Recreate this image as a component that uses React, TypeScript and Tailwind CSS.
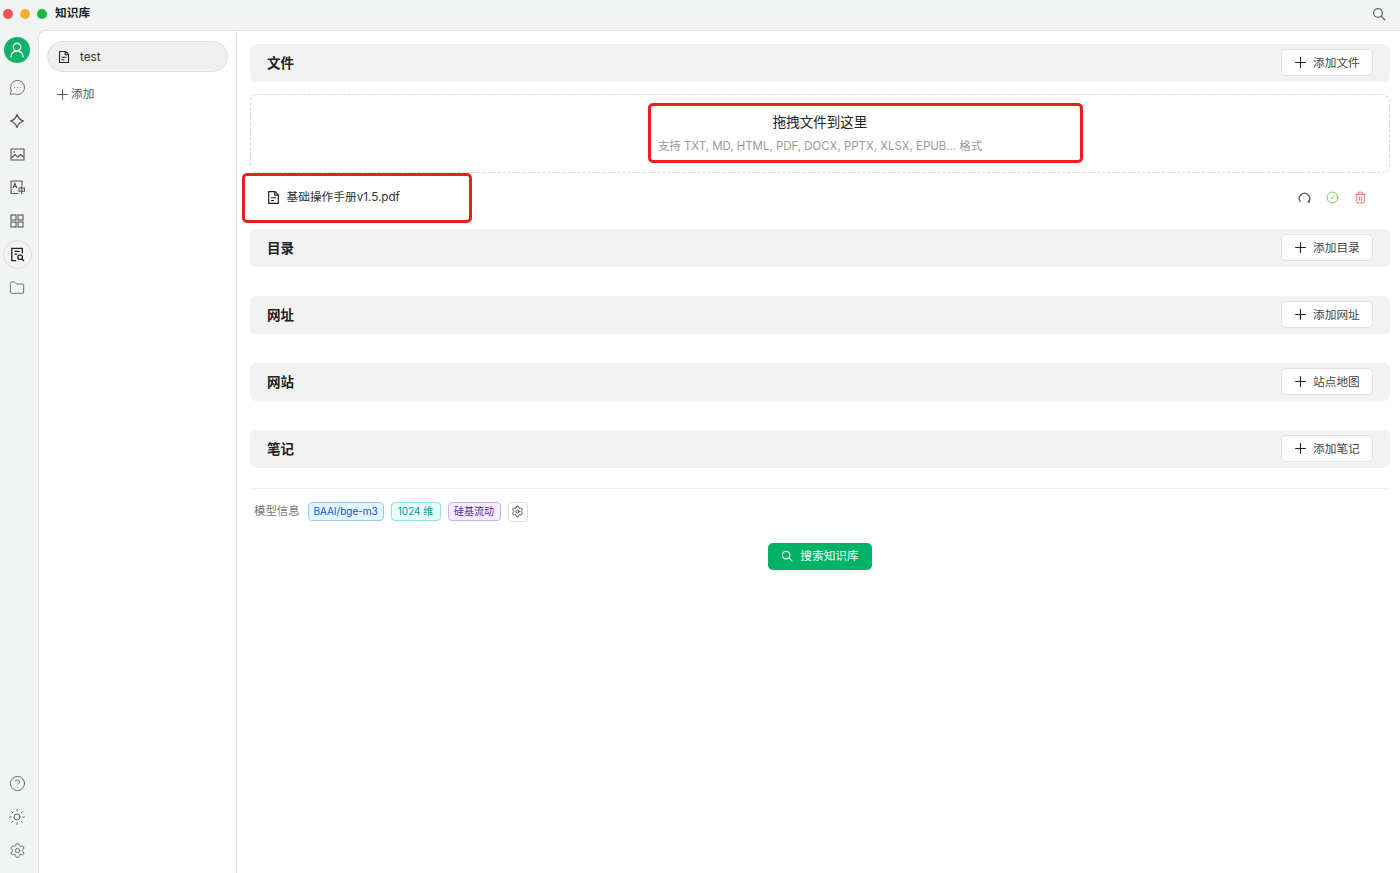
import { ReactNode } from "react";
import { Plus, MessageCircleMore, Folder, CircleHelp, Sun, Settings, CircleCheck, Trash2, UserRound } from "lucide-react";

const font = "font-['Inter','Noto_Sans_CJK_SC',sans-serif]";

function SearchIcon({ size }: { size: number }) {
  return (
    <svg width={size} height={size} viewBox="0 0 16 16" fill="none" stroke="currentColor" strokeWidth="1.5" strokeLinecap="round">
      <circle cx="6.8" cy="6.8" r="5" />
      <path d="M10.6 10.6L14.6 14.6" />
    </svg>
  );
}

function DocIcon({ size }: { size: number }) {
  return (
    <svg width={size} height={size} viewBox="0 0 14 14" fill="none" stroke="currentColor" strokeWidth="1.1" strokeLinejoin="round">
      <path d="M2.5 1.5H8.5L11.5 4.5V12.5H2.5Z" />
      <path d="M8.2 1.5V4.8H11.5" />
      <path d="M4.5 7.2H9.5M4.5 9.8H7.5" />
    </svg>
  );
}

function Diamond() {
  return (
    <svg width="16" height="16" viewBox="0 0 16 16" fill="none" stroke="currentColor" strokeWidth="1.25" strokeLinejoin="round">
      <path d="M8 1.5C9 4.8 11.2 7 14.5 8C11.2 9 9 11.2 8 14.5C7 11.2 4.8 9 1.5 8C4.8 7 7 4.8 8 1.5Z" />
    </svg>
  );
}

function PictureIcon() {
  return (
    <svg width="15" height="15" viewBox="0 0 15 15" fill="none" stroke="currentColor" strokeWidth="1.1" strokeLinejoin="round">
      <rect x="1" y="2" width="13" height="11" />
      <circle cx="4" cy="5" r="0.8" fill="currentColor" stroke="none" />
      <path d="M1.5 11L5 7.5L8 10L10.5 7.5L14 10.5" />
    </svg>
  );
}

function TranslateDoc() {
  return (
    <svg width="15" height="15" viewBox="0 0 15 15" fill="none" stroke="currentColor" strokeWidth="1.1">
      <path d="M8.5 13.5H1V1H12V5.5" />
      <path d="M3 8L4.9 3.2L6.8 8M3.8 6.5H6" />
      <path d="M9 8H14.5V11.2H9ZM11.7 6V14" />
    </svg>
  );
}

function GridIcon() {
  return (
    <svg width="14" height="14" viewBox="0 0 14 14" fill="none" stroke="currentColor" strokeWidth="1.1">
      <rect x="1" y="1" width="5" height="5" />
      <rect x="8" y="1" width="5" height="5" />
      <rect x="1" y="8" width="5" height="5" />
      <rect x="8" y="8" width="5" height="5" />
    </svg>
  );
}

function KnowledgeDoc() {
  return (
    <svg width="15" height="15" viewBox="0 0 17 17" fill="none" stroke="currentColor" strokeWidth="1.5">
      <path d="M7 15.5H2V1.5H14V7" />
      <path d="M5 5H11M5 8H8" />
      <circle cx="11.5" cy="11.5" r="2.6" />
      <path d="M13.5 13.5L15.8 15.8" />
    </svg>
  );
}

function SpinArc() {
  return (
    <svg width="13" height="13" viewBox="0 0 13 13" fill="none" stroke="currentColor" strokeWidth="1.3" strokeLinecap="round">
      <path d="M2.2 10.5A5.2 5.2 0 1 1 10.8 10.5" />
      <path d="M10 10.8L11.2 11L11.3 9.6" />
    </svg>
  );
}

function NavIcon({ children, active }: { children: ReactNode; active?: boolean }) {
  return (
    <div className={`w-[29px] h-[29px] shrink-0 flex items-center justify-center rounded-full ${active ? "border border-[#dcdcdc] text-[#222]" : "text-[#555]"}`}>
      {children}
    </div>
  );
}

function Section({ title, action }: { title: string; action: string }) {
  return (
    <div className="h-[37.5px] shrink-0 bg-[#f2f2f2] rounded-[6px] flex items-center justify-between pl-[17px] pr-[17px]">
      <span className="text-[13.5px] font-semibold text-[#222]">{title}</span>
      <button className="w-[92px] h-[27px] bg-white border border-[#e0e0e0] rounded-[5px] flex items-center pl-[10px] gap-[4px] text-[11.7px] text-[#444]">
        <Plus size={17} strokeWidth={1.5} className="text-[#222]" />
        <span className="pt-[2px]">{action}</span>
      </button>
    </div>
  );
}

function Tag({ text, cls }: { text: string; cls: string }) {
  return <span className={`h-[19px] flex items-center justify-center rounded-[4px] border text-[10px] ${cls}`}>{text}</span>;
}

export default function App() {
  return (
    <div className={`w-[1400px] h-[873px] overflow-hidden flex flex-col bg-[#f2f3f3] ${font}`}>
      {/* title bar */}
      <div className="h-[30px] shrink-0 flex items-center pl-[3px] pr-[14px] pb-[2px]">
        <span className="w-[10px] h-[10px] rounded-full bg-[#f4534e]" />
        <span className="w-[10px] h-[10px] rounded-full bg-[#fbab34] ml-[7px]" />
        <span className="w-[10px] h-[10px] rounded-full bg-[#1fb647] ml-[7px]" />
        <span className="ml-[8px] text-[11.7px] font-semibold text-[#222]">知识库</span>
        <span className="ml-auto text-[#666]"><SearchIcon size={14} /></span>
      </div>

      <div className="flex-1 flex min-h-0">
        {/* icon rail */}
        <div className="w-[38px] shrink-0 flex flex-col items-center justify-between pt-[7px] pb-[8px] pr-[4px]">
          <div className="flex flex-col items-center">
            <div className="w-[26px] h-[26px] rounded-full bg-[#10b26a] flex items-center justify-center text-white mb-[10px]">
              <UserRound size={18} strokeWidth={1.7} />
            </div>
            <div className="flex flex-col items-center gap-[4.4px]">
              <NavIcon><MessageCircleMore size={17} strokeWidth={1.15} /></NavIcon>
              <NavIcon><Diamond /></NavIcon>
              <NavIcon><PictureIcon /></NavIcon>
              <NavIcon><TranslateDoc /></NavIcon>
              <NavIcon><GridIcon /></NavIcon>
              <NavIcon active><KnowledgeDoc /></NavIcon>
              <NavIcon><Folder size={16} strokeWidth={1.2} /></NavIcon>
            </div>
          </div>
          <div className="flex flex-col items-center gap-[4.4px]">
            <NavIcon><CircleHelp size={17} strokeWidth={1.2} /></NavIcon>
            <NavIcon><Sun size={18} strokeWidth={1.2} /></NavIcon>
            <NavIcon><Settings size={17} strokeWidth={1.2} /></NavIcon>
          </div>
        </div>

        {/* content */}
        <div className="flex-1 flex bg-white rounded-tl-[8px] border-l border-t border-[#e2e3e3] min-w-0">
          <div className="w-[198px] shrink-0 border-r border-[#e4e4e4] pt-[10px] pl-[8px] pr-[8px]">
            <div className="w-[181px] h-[31px] bg-[#f0f0f0] border border-[#dedede] rounded-full flex items-center pl-[9px] gap-[9px] text-[11.7px] text-[#333]">
              <span className="text-[#222]"><DocIcon size={14} /></span>
              <span className="pt-[2px]">test</span>
            </div>
            <div className="mt-[14px] ml-[7px] flex items-center text-[11.7px] text-[#555]">
              <Plus size={17} strokeWidth={1.1} className="text-[#333]" />
              添加
            </div>
          </div>

          <div className="flex-1 min-w-0 flex flex-col pl-[13px] pr-[10px] pt-[13px]">
            <Section title="文件" action="添加文件" />

            <div className="relative mt-[12.5px] h-[79px] shrink-0 border border-dashed border-[#d9d9d9] rounded-[8px] flex flex-col items-center pt-[17px]">
              <div className="text-[13.5px] leading-[20px] text-[#222]">拖拽文件到这里</div>
              <div className="text-[11.45px] leading-[16px] mt-[6px] text-[#999]">支持 TXT, MD, HTML, PDF, DOCX, PPTX, XLSX, EPUB... 格式</div>
              <div className="absolute left-[397px] top-[7.5px] w-[435px] h-[60px] border-[3px] border-[#e8201a] rounded-[5px]" />
            </div>

            <div className="relative h-[47px] shrink-0 mt-[1px] flex items-center pl-[15.5px] pr-[23px] text-[11.7px] text-[#333]">
              <span className="text-[#222]"><DocIcon size={15} /></span>
              <span className="ml-[6px]">基础操作手册v1.5.pdf</span>
              <div className="ml-auto flex items-center gap-[15px]">
                <span className="text-[#555]"><SpinArc /></span>
                <CircleCheck size={13} strokeWidth={1.5} className="text-[#52c41a]" />
                <Trash2 size={13} strokeWidth={1.5} className="text-[#ff4d4f]" />
              </div>
              <div className="absolute left-[-8px] top-[-1px] w-[230px] h-[50px] border-[3px] border-[#e8201a] rounded-[5px]" />
            </div>

            <div className="mt-[8px]"><Section title="目录" action="添加目录" /></div>
            <div className="mt-[29.5px]"><Section title="网址" action="添加网址" /></div>
            <div className="mt-[29.5px]"><Section title="网站" action="站点地图" /></div>
            <div className="mt-[29.5px]"><Section title="笔记" action="添加笔记" /></div>

            <div className="mt-[20.5px] border-t border-[#efefef] pl-[4px] flex items-center gap-[7px] h-[46px]">
              <span className="text-[11.4px] text-[#777] mr-[1px]">模型信息</span>
              <Tag text="BAAI/bge-m3" cls="w-[76px] bg-[#e6f4ff] border-[#91caff] text-[#0958d9]" />
              <Tag text="1024 维" cls="w-[50px] bg-[#e6fffb] border-[#87e8de] text-[#08979c]" />
              <Tag text="硅基流动" cls="w-[53px] bg-[#f9f0ff] border-[#d3adf7] text-[#531dab]" />
              <button className="w-[20px] h-[20px] border border-[#dedede] rounded-[4px] flex items-center justify-center text-[#222]">
                <Settings size={13} strokeWidth={1.5} />
              </button>
            </div>

            <div className="mt-[9px] flex justify-center">
              <button className="w-[104px] h-[26.5px] bg-[#00b265] rounded-[5px] flex items-center justify-center gap-[7px] text-[11.7px] text-white">
                <SearchIcon size={12} />
                <span className="pt-[1px]">搜索知识库</span>
              </button>
            </div>
          </div>
        </div>
      </div>
    </div>
  );
}
